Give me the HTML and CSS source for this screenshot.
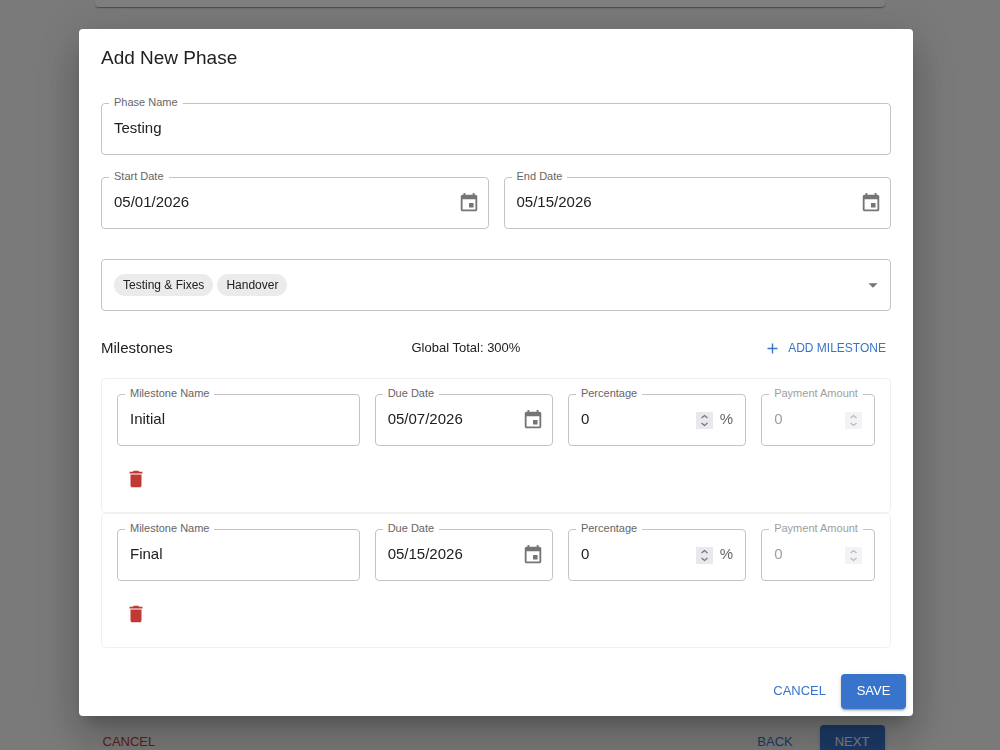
FILE: index.html
```html
<!DOCTYPE html>
<html lang="en">
<head>
    <meta charset="UTF-8">
    <meta name="viewport" content="width=device-width, initial-scale=1.0">
    <title>Add New Phase</title>
    <link rel="stylesheet" href="styles.css">
</head>
<body>

    <!-- Shared icons -->
    <svg class="icon-defs" aria-hidden="true">
        <symbol id="icon-event" viewBox="0 0 24 24">
            <path d="M17 12h-5v5h5v-5zM16 1v2H8V1H6v2H5c-1.11 0-1.99.9-1.99 2L3 19c0 1.1.89 2 2 2h14c1.1 0 2-.9 2-2V5c0-1.1-.9-2-2-2h-1V1h-2zm3 18H5V8h14v11z"/>
        </symbol>
        <symbol id="icon-delete" viewBox="0 0 24 24">
            <path d="M6 19c0 1.1.9 2 2 2h8c1.1 0 2-.9 2-2V7H6v12zM19 4h-3.5l-1-1h-5l-1 1H5v2h14V4z"/>
        </symbol>
        <symbol id="icon-stepper" viewBox="0 0 17 17">
            <path d="M5.5 6l3-2.5 3 2.5M5.5 11l3 2.5 3-2.5" fill="none" stroke="currentColor" stroke-width="1.2"/>
        </symbol>
    </svg>

    <main class="wizard">
        <div class="wizard-card"></div>
        <div class="wizard-body"></div>
        <div class="wizard-nav">
            <button type="button" class="btn btn-error">CANCEL</button>
            <div class="wizard-steps">
                <button type="button" class="btn">BACK</button>
                <button type="button" class="btn btn-contained">NEXT</button>
            </div>
        </div>
    </main>

    <div class="backdrop">
        <form class="dialog" role="dialog" aria-labelledby="dialog-title">
            <h2 class="dialog-title" id="dialog-title">Add New Phase</h2>

            <div class="dialog-content">
                <div class="field">
                    <label for="phase-name">Phase Name</label>
                    <input type="text" id="phase-name" value="Testing">
                </div>

                <div class="date-row">
                    <div class="field field-date">
                        <label for="start-date">Start Date</label>
                        <input type="text" id="start-date" value="05/01/2026">
                        <button type="button" class="icon-btn" aria-label="Choose start date"><svg><use href="#icon-event"/></svg></button>
                    </div>
                    <div class="field field-date">
                        <label for="end-date">End Date</label>
                        <input type="text" id="end-date" value="05/15/2026">
                        <button type="button" class="icon-btn" aria-label="Choose end date"><svg><use href="#icon-event"/></svg></button>
                    </div>
                </div>

                <button type="button" class="field field-select" role="combobox" aria-haspopup="listbox" aria-expanded="false" aria-label="Services">
                    <span class="chip">Testing &amp; Fixes</span>
                    <span class="chip">Handover</span>
                    <svg class="arrow" viewBox="0 0 24 24"><path d="M7 10l5 5 5-5z"/></svg>
                </button>

                <div class="milestones-header">
                    <h3>Milestones</h3>
                    <span class="total">Global Total: 300%</span>
                    <button type="button" class="btn btn-small">
                        <svg viewBox="0 0 24 24"><path d="M19 13h-6v6h-2v-6H5v-2h6V5h2v6h6v2z"/></svg>
                        ADD MILESTONE
                    </button>
                </div>

                <div class="milestone">
                    <div class="field col-4">
                        <label for="name-1">Milestone Name</label>
                        <input type="text" id="name-1" value="Initial">
                    </div>
                    <div class="field field-date col-3">
                        <label for="due-1">Due Date</label>
                        <input type="text" id="due-1" value="05/07/2026">
                        <button type="button" class="icon-btn" aria-label="Choose due date"><svg><use href="#icon-event"/></svg></button>
                    </div>
                    <div class="field col-3">
                        <label for="percent-1">Percentage</label>
                        <input type="number" id="percent-1" value="0">
                        <svg class="stepper"><use href="#icon-stepper"/></svg>
                        <span class="unit">%</span>
                    </div>
                    <div class="field disabled col-2">
                        <label for="amount-1">Payment Amount</label>
                        <input type="number" id="amount-1" value="0" disabled>
                        <svg class="stepper"><use href="#icon-stepper"/></svg>
                    </div>
                    <div class="col-12">
                        <button type="button" class="icon-btn delete-btn" aria-label="Delete milestone"><svg><use href="#icon-delete"/></svg></button>
                    </div>
                </div>

                <div class="milestone">
                    <div class="field col-4">
                        <label for="name-2">Milestone Name</label>
                        <input type="text" id="name-2" value="Final">
                    </div>
                    <div class="field field-date col-3">
                        <label for="due-2">Due Date</label>
                        <input type="text" id="due-2" value="05/15/2026">
                        <button type="button" class="icon-btn" aria-label="Choose due date"><svg><use href="#icon-event"/></svg></button>
                    </div>
                    <div class="field col-3">
                        <label for="percent-2">Percentage</label>
                        <input type="number" id="percent-2" value="0">
                        <svg class="stepper"><use href="#icon-stepper"/></svg>
                        <span class="unit">%</span>
                    </div>
                    <div class="field disabled col-2">
                        <label for="amount-2">Payment Amount</label>
                        <input type="number" id="amount-2" value="0" disabled>
                        <svg class="stepper"><use href="#icon-stepper"/></svg>
                    </div>
                    <div class="col-12">
                        <button type="button" class="icon-btn delete-btn" aria-label="Delete milestone"><svg><use href="#icon-delete"/></svg></button>
                    </div>
                </div>
            </div>

            <div class="dialog-actions">
                <button type="button" class="btn">CANCEL</button>
                <button type="submit" class="btn btn-contained">SAVE</button>
            </div>
        </form>
    </div>

</body>
</html>
```

FILE: styles.css
```css
* {
    box-sizing: border-box;
}
body {
    margin: 0;
    padding-right: 21px;
    height: 100vh;
    overflow: hidden;
    background-color: #f5f5f5;
    color: #212121;
    font-family: "Liberation Sans", Arial, sans-serif;
    font-size: 15px;
}
button, input {
    font-family: inherit;
    color: inherit;
}
button {
    border: 0;
    background: none;
    cursor: pointer;
}
svg {
    fill: currentColor;
    flex-shrink: 0;
}
.icon-defs {
    display: none;
}

/* Page behind the dialog */
.wizard {
    max-width: 790px;
    margin: 0 auto;
}
.wizard-card {
    height: 7px;
    background-color: #fff;
    border-radius: 0 0 4px 4px;
    box-shadow: 0 2px 1px -1px rgba(0, 0, 0, .2), 0 1px 1px rgba(0, 0, 0, .14), 0 1px 3px rgba(0, 0, 0, .12);
}
.wizard-body {
    min-height: 718px;
}
.wizard-nav {
    display: flex;
    justify-content: space-between;
}
.wizard-steps {
    display: flex;
    gap: 15px;
}

/* Buttons */
.btn {
    display: inline-flex;
    align-items: center;
    justify-content: center;
    min-width: 59px;
    height: 35px;
    padding: 0 8px 2px;
    border-radius: 4px;
    color: #3874cb;
    font-size: 13px;
}
.btn-contained {
    min-width: 65px;
    padding: 0 15px 2px;
    background-color: #3874cb;
    color: #fff;
    box-shadow: 0 3px 1px -2px rgba(0, 0, 0, .2), 0 2px 2px rgba(0, 0, 0, .14), 0 1px 5px rgba(0, 0, 0, .12);
}
.btn-error {
    color: #c43c35;
}
.btn-small {
    height: 28px;
    padding: 0 5px;
    gap: 7px;
    font-size: 12px;
}
.btn-small svg {
    width: 17px;
    height: 17px;
}
.icon-btn {
    display: flex;
    align-items: center;
    justify-content: center;
    padding: 0;
    color: #757575;
}
.icon-btn svg {
    width: 22px;
    height: 22px;
}

/* Dialog */
.backdrop {
    position: fixed;
    inset: 0;
    display: flex;
    justify-content: center;
    align-items: flex-start;
    padding: 29px 38px 29px 30px;
    background-color: rgba(0, 0, 0, .5);
}
.dialog {
    width: 100%;
    max-width: 834px;
    background-color: #fff;
    border-radius: 4px;
    box-shadow: 0 11px 15px -7px rgba(0, 0, 0, .2), 0 24px 38px 3px rgba(0, 0, 0, .14), 0 9px 46px 8px rgba(0, 0, 0, .12);
}
.dialog-title {
    margin: 0;
    padding: 14px 22px 16px;
    font-size: 19px;
    font-weight: normal;
    line-height: 30px;
}
.dialog-content {
    padding: 14px 22px 19px;
}
.dialog-actions {
    display: flex;
    justify-content: flex-end;
    gap: 7px;
    padding: 7px;
}

/* Outlined fields */
.field {
    position: relative;
    display: flex;
    align-items: center;
    height: 52px;
    padding: 0 12px;
    border: 1px solid #c4c4c4;
    border-radius: 4px;
}
/* Label sits on the top border and cuts a gap in it */
.field label {
    position: absolute;
    top: -8px;
    left: 7px;
    padding: 0 5px;
    background-color: #fff;
    color: #666;
    font-size: 11px;
    line-height: 13px;
    white-space: nowrap;
}
.field input {
    flex: 1;
    min-width: 0;
    height: 22px;
    padding: 0 0 3px;
    border: 0;
    outline: 0;
    background: none;
    font-size: 15px;
}
.field input[type=number] {
    appearance: textfield;
    -moz-appearance: textfield;
}
.field input::-webkit-inner-spin-button {
    -webkit-appearance: none;
    margin: 0;
}
.field-date {
    padding-right: 8px;
}
.stepper {
    width: 17px;
    height: 17px;
    background-color: #e9e9ed;
    color: #73737a;
}
.unit {
    margin-left: 7px;
    padding-bottom: 3px;
    color: #666;
}
.field.disabled label,
.field.disabled input {
    color: #9e9e9e;
}
.field.disabled .stepper {
    opacity: .5;
}
.date-row {
    display: grid;
    grid-template-columns: 1fr 1fr;
    gap: 15px;
    margin: 22px 0 30px;
}
.field-select {
    width: 100%;
    padding-right: 6px;
    gap: 4px;
}
.chip {
    padding: 0 9px;
    border-radius: 11px;
    background-color: #ebebeb;
    font-size: 12px;
    line-height: 22px;
}
.arrow {
    width: 22px;
    height: 22px;
    margin-left: auto;
    color: #757575;
}

/* Milestones */
.milestones-header {
    display: flex;
    justify-content: space-between;
    align-items: center;
    margin: 23px 0 16px;
}
.milestones-header h3 {
    margin: 0;
    padding-bottom: 2px;
    font-size: 15px;
    font-weight: normal;
}
.total {
    padding-bottom: 2px;
    font-size: 13px;
}
.milestone {
    display: grid;
    grid-template-columns: repeat(12, 1fr);
    gap: 15px;
    padding: 15px;
    border: 1px solid #f0f0f0;
    border-radius: 4px;
}
.col-2 {
    grid-column: span 2;
}
.col-3 {
    grid-column: span 3;
}
.col-4 {
    grid-column: span 4;
}
.col-12 {
    grid-column: span 12;
}
.delete-btn {
    width: 37px;
    height: 36px;
    color: #c03a33;
}
```
